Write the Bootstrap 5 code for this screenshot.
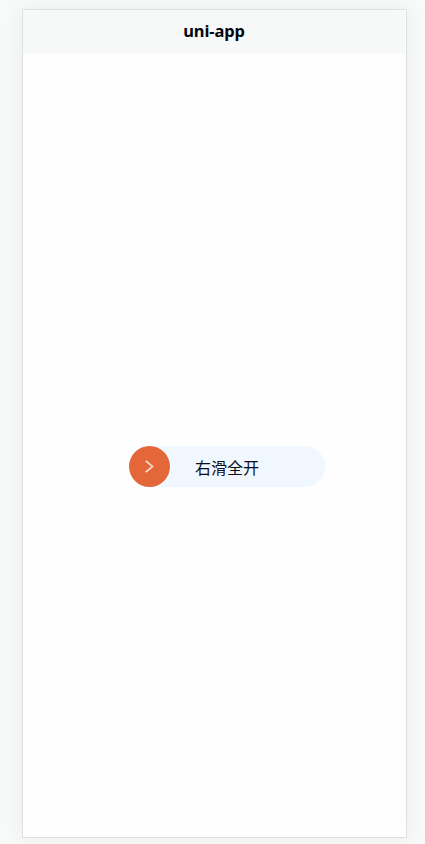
<!DOCTYPE html>
<html lang="zh">
<head>
<meta charset="utf-8">
<meta name="viewport" content="width=device-width, initial-scale=1">
<title>uni-app</title>
<link href="https://cdn.jsdelivr.net/npm/bootstrap@5.3.0/dist/css/bootstrap.min.css" rel="stylesheet">
<style>
body{background:#f8f9f9;font-family:"Noto Sans","Noto Sans CJK SC",sans-serif;height:844px;padding:9px 18px 6px 22px;color:#0b0e1a}
.phone{height:829px;width:385px;background:#fefefe;border:1px solid #dfe1e1;box-shadow:0 0 20px rgba(0,0,0,.06)}
.topbar{height:44px;width:382px;background:#f7f9f9;padding-bottom:2px}
.topbar h1{font-size:16.5px;line-height:24px;letter-spacing:-.1px;color:#05070f}
.stage{padding:392px 0 0 106px}
.slider{width:196px;height:41px;background:#f0f7ff}
.knob{width:41px;height:41px;background:#e4673a}
.tip{font-family:"Noto Sans CJK SC",sans-serif;font-size:16px;line-height:24px;margin-left:25px;font-weight:400;color:#0b0e1a}
</style>
<script src="https://cdn.jsdelivr.net/npm/bootstrap@5.3.0/dist/js/bootstrap.bundle.min.js"></script>
</head>
<body class="overflow-hidden">
<main class="phone">
<header class="topbar d-flex align-items-center justify-content-center"><h1 class="fw-bold m-0">uni-app</h1></header>
<section class="stage">
<div class="slider rounded-pill d-flex align-items-center">
<div class="knob rounded-circle flex-shrink-0 d-flex align-items-center justify-content-center">
<svg width="11" height="15" viewBox="0 0 11 15" fill="none" stroke="#fbe3d8" stroke-width="1.6"><path d="M1.7 1.9 8.5 7.5 1.7 13.1"/></svg>
</div>
<span class="tip">右滑全开</span>
</div>
</section>
</main>
</body>
</html>
